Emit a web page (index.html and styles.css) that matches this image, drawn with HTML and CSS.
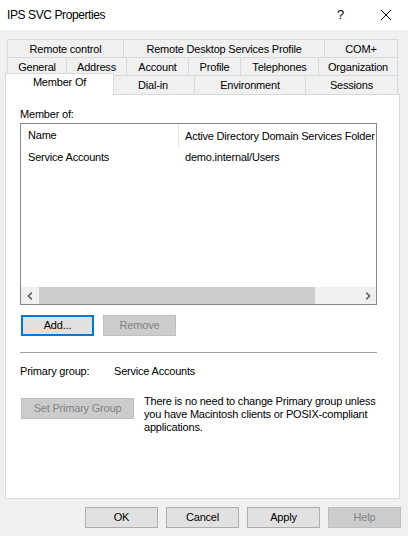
FILE: index.html
```html
<!DOCTYPE html>
<html lang="en">
<head>
    <meta charset="UTF-8">
    <title>IPS SVC Properties</title>
    <link rel="stylesheet" href="styles.css">
</head>
<body>
    <div class="titlebar">
        <span class="title">IPS SVC Properties</span>
        <span class="help-q">?</span>
        <span class="close-btn">
            <svg width="10" height="10" viewBox="0 0 10 10" fill="none" stroke="#000" stroke-width="1">
                <line x1="0" y1="0" x2="10" y2="10"></line>
                <line x1="10" y1="0" x2="0" y2="10"></line>
            </svg>
        </span>
    </div>

    <div class="dialog">
        <div class="tabs">
            <div class="tab-row">
                <div class="tab w-remote">Remote control</div>
                <div class="tab w-rds">Remote Desktop Services Profile</div>
                <div class="tab w-com">COM+</div>
            </div>
            <div class="tab-row">
                <div class="tab w-general">General</div>
                <div class="tab w-address">Address</div>
                <div class="tab w-account">Account</div>
                <div class="tab w-profile">Profile</div>
                <div class="tab w-phones">Telephones</div>
                <div class="tab w-org">Organization</div>
            </div>
            <div class="tab-row last">
                <div class="tab selected">Member Of</div>
                <div class="tab w-dialin">Dial-in</div>
                <div class="tab w-env">Environment</div>
                <div class="tab w-sessions">Sessions</div>
            </div>
        </div>

        <div class="panel">
            <div class="label">Member of:</div>
            <div class="listview">
                <div class="lv-header">
                    <div class="lv-col first">Name</div>
                    <div class="lv-col">Active Directory Domain Services Folder</div>
                </div>
                <div class="lv-row">
                    <div class="lv-cell first">Service Accounts</div>
                    <div class="lv-cell">demo.internal/Users</div>
                </div>
                <div class="hscroll">
                    <span class="sb-btn">
                        <svg width="6" height="8" viewBox="0 0 6 8" fill="none" stroke="#606060" stroke-width="1.6">
                            <polyline points="4.8,0.6 1.4,4 4.8,7.4"></polyline>
                        </svg>
                    </span>
                    <span class="sb-thumb"></span>
                    <span class="sb-track"></span>
                    <span class="sb-btn">
                        <svg width="6" height="8" viewBox="0 0 6 8" fill="none" stroke="#606060" stroke-width="1.6">
                            <polyline points="1.2,0.6 4.6,4 1.2,7.4"></polyline>
                        </svg>
                    </span>
                </div>
            </div>

            <div class="btn-row">
                <button class="btn default">Add...</button>
                <button class="btn" disabled>Remove</button>
            </div>

            <div class="separator"></div>

            <div class="primary-row">
                <span class="primary-label">Primary group:</span>
                <span>Service Accounts</span>
            </div>

            <div class="set-row">
                <button class="btn wide" disabled>Set Primary Group</button>
                <p class="note">There is no need to change Primary group unless<br>you have Macintosh clients or POSIX-compliant<br>applications.</p>
            </div>
        </div>

        <div class="actions">
            <button class="btn">OK</button>
            <button class="btn">Cancel</button>
            <button class="btn">Apply</button>
            <button class="btn" disabled>Help</button>
        </div>
    </div>
</body>
</html>
```

FILE: styles.css
```css
* {
    margin: 0;
    padding: 0;
    box-sizing: border-box;
}

body {
    width: 408px;
    height: 536px;
    overflow: hidden;
    background: #f0f0f0;
    color: #000;
    font-family: "Liberation Sans", Arial, sans-serif;
    font-size: 11px;
    letter-spacing: -0.2px;
}

/* title bar */
.titlebar {
    height: 30px;
    background: #ffffff;
    display: flex;
    align-items: center;
    padding-left: 7px;
    line-height: 30px;
}

.title {
    font-size: 12px;
    letter-spacing: -0.4px;
}

.help-q {
    margin-left: auto;
    width: 45px;
    text-align: center;
    font-size: 13px;
    letter-spacing: 0;
}

.close-btn {
    width: 45px;
    height: 30px;
    display: flex;
    align-items: center;
    justify-content: center;
}

/* tabs */
.dialog {
    padding: 9px 7px 0 5px;
}

.tabs {
    margin-left: 2px;
    width: 391px;
}

.tab-row {
    display: flex;
    align-items: flex-start;
    height: 18px;
}

.tab-row.last {
    height: 19px;
}

.tab {
    height: 18px;
    border: 1px solid #d9d9d9;
    border-bottom: none;
    background: #f0f0f0;
    margin-left: -1px;
    text-align: center;
    white-space: nowrap;
    padding-top: 1px;
    line-height: 16px;
}

.tab:first-child {
    margin-left: 0;
}

.tab-row.last .tab {
    height: 19px;
}

.tab-row.last .tab.selected {
    position: relative;
    z-index: 2;
    width: 109px;
    height: 22px;
    margin: -2px -3px 0 -2px;
    padding-top: 0;
    background: #ffffff;
}

.w-remote { width: 117px; }
.w-rds { width: 202px; }
.w-com { width: 74px; }

.w-general { width: 60px; }
.w-address { width: 61px; }
.w-account { width: 63px; }
.w-profile { width: 53px; }
.w-phones { width: 79px; }
.w-org { width: 80px; }

.w-dialin { width: 84px; }
.w-env { width: 112px; }
.w-sessions { width: 93px; }

.tab-row.last .w-dialin { margin-left: 0; }

/* page body */
.panel {
    width: 395px;
    height: 405px;
    background: #ffffff;
    border: 1px solid #d9d9d9;
    padding: 13px 0 0 14px;
    line-height: 13px;
}

.label {
    height: 13px;
}

.listview {
    margin-top: 2px;
    width: 357px;
    height: 182px;
    border: 1px solid #828790;
    display: flex;
    flex-direction: column;
    overflow: hidden;
}

.lv-header {
    display: flex;
    height: 25px;
    align-items: center;
}

.lv-row {
    display: flex;
    height: 17px;
    align-items: center;
}

.lv-col,
.lv-cell {
    white-space: nowrap;
    padding-left: 6px;
}

.lv-col.first,
.lv-cell.first {
    width: 158px;
    flex-shrink: 0;
    padding-left: 7px;
}

.lv-col.first {
    height: 23px;
    line-height: 22px;
    border-right: 1px solid #e5e5e5;
    margin-top: -2px;
}

.hscroll {
    margin-top: auto;
    height: 17px;
    display: flex;
    background: #f0f0f0;
}

.sb-btn {
    width: 17px;
    display: flex;
    align-items: center;
    justify-content: center;
}

.sb-thumb {
    width: 276px;
    margin-left: 1px;
    background: #cdcdcd;
}

.sb-track {
    flex: 1;
}

/* buttons */
.btn {
    width: 73px;
    height: 21px;
    font-family: inherit;
    font-size: 11px;
    letter-spacing: -0.2px;
    color: #000;
    background: #e1e1e1;
    border: 1px solid #adadad;
    line-height: 17px;
}

.btn.default {
    border: 2px solid #0078d7;
}

.btn:disabled {
    background: #cccccc;
    border-color: #bfbfbf;
    color: #838383;
}

.btn.wide {
    width: 113px;
}

.btn-row {
    display: flex;
    gap: 9px;
    margin: 10px 0 0 1px;
}

.separator {
    width: 357px;
    margin-top: 16px;
    border-top: 1px solid #a0a0a0;
}

.primary-row {
    margin-top: 12px;
    display: flex;
}

.primary-label {
    width: 94px;
}

.set-row {
    margin: 20px 0 0 1px;
    display: flex;
    align-items: flex-start;
}

.note {
    margin: -3px 0 0 10px;
}

.actions {
    display: flex;
    justify-content: flex-end;
    gap: 8px;
    margin-top: 8px;
}
```
